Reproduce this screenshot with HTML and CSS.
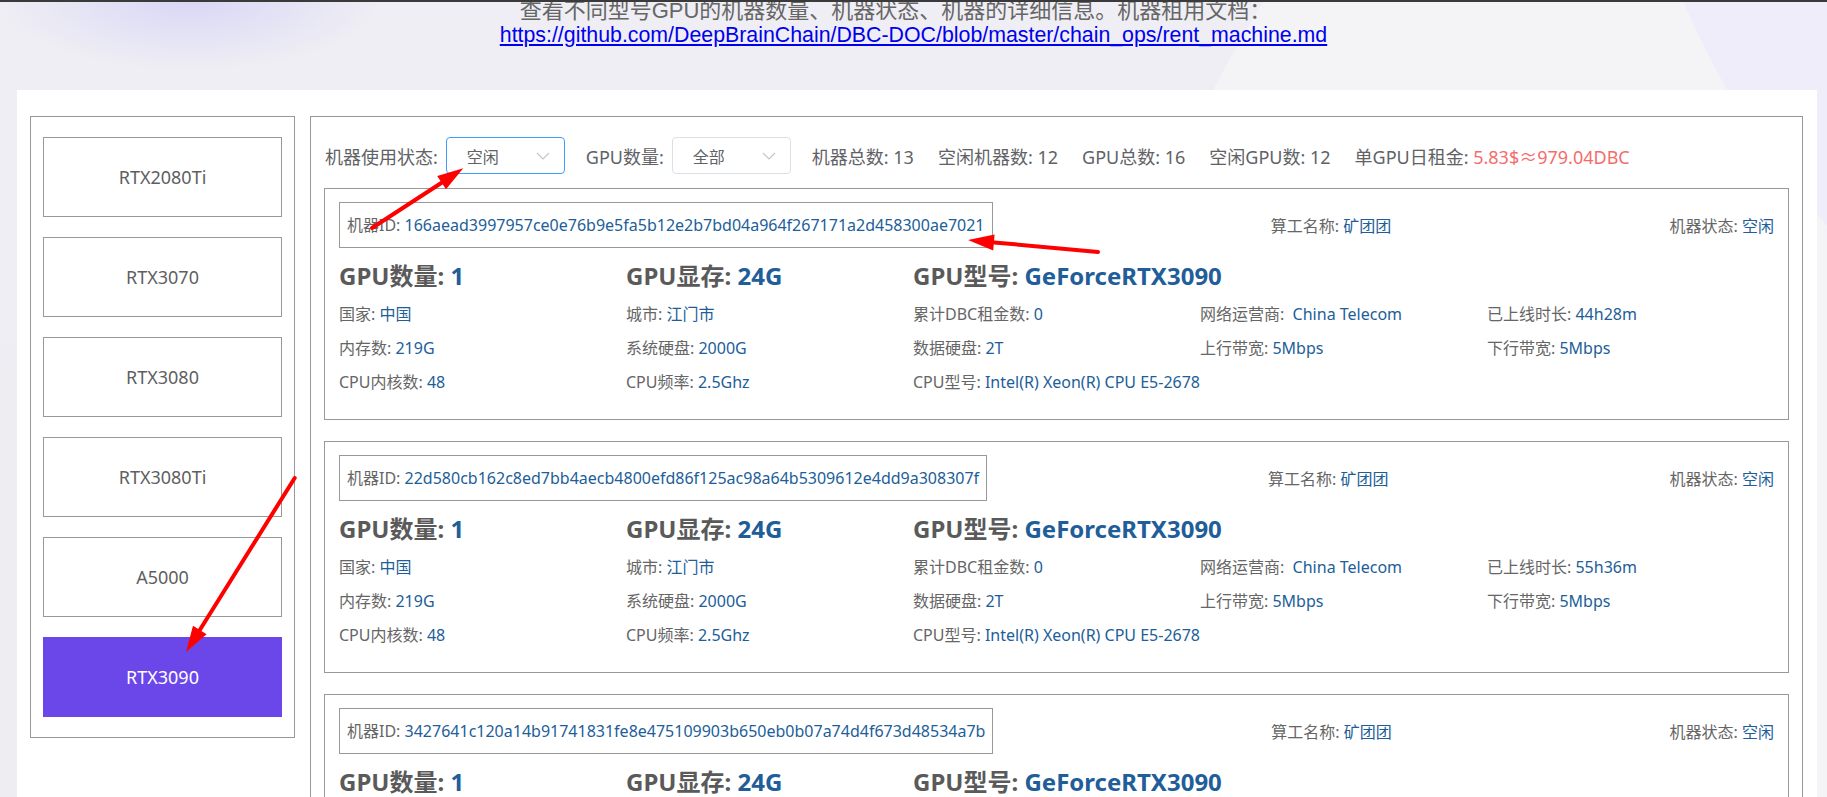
FILE: index.html
```html
<!DOCTYPE html>
<html lang="zh-CN">
<head>
<meta charset="utf-8">
<title>GPU 机器列表</title>
<link rel="stylesheet" href="styles.css">
</head>
<body>
<div class="topline"></div>
<div class="intro">
  <div class="intro-text">查看不同型号GPU的机器数量、机器状态、机器的详细信息。机器租用文档：</div>
  <div><a href="#">https://github.com/DeepBrainChain/DBC-DOC/blob/master/chain_ops/rent_machine.md</a></div>
</div>

<div class="board">
  <div class="models">
    <div class="model">RTX2080Ti</div>
    <div class="model">RTX3070</div>
    <div class="model">RTX3080</div>
    <div class="model">RTX3080Ti</div>
    <div class="model">A5000</div>
    <div class="model active">RTX3090</div>
  </div>

  <div class="machines">
    <div class="filters">
      <span class="flabel">机器使用状态:</span>
      <div class="select focus"><span>空闲</span><svg class="chev" width="14" height="8" viewBox="0 0 14 8"><polyline points="1,1 7,7 13,1" fill="none" stroke="#c0c4cc" stroke-width="1.2"/></svg></div>
      <span class="flabel">GPU数量:</span>
      <div class="select"><span>全部</span><svg class="chev" width="14" height="8" viewBox="0 0 14 8"><polyline points="1,1 7,7 13,1" fill="none" stroke="#c0c4cc" stroke-width="1.2"/></svg></div>
      <span class="stat">机器总数: 13</span>
      <span class="stat">空闲机器数: 12</span>
      <span class="stat">GPU总数: 16</span>
      <span class="stat">空闲GPU数: 12</span>
      <span class="stat">单GPU日租金: <span class="price">5.83$≈979.04DBC</span></span>
    </div>

    <div class="card">
      <div class="card-top">
        <div class="idbox"><span class="lbl">机器ID: </span><span class="val">166aead3997957ce0e76b9e5fa5b12e2b7bd04a964f267171a2d458300ae7021</span></div>
        <div><span class="lbl">算工名称: </span><span class="val">矿团团</span></div>
        <div><span class="lbl">机器状态: </span><span class="val">空闲</span></div>
      </div>
      <div class="heads">
        <div>GPU数量: <span class="val">1</span></div>
        <div>GPU显存: <span class="val">24G</span></div>
        <div class="wide">GPU型号: <span class="val">GeForceRTX3090</span></div>
      </div>
      <div class="rows">
        <div><span class="lbl">国家: </span><span class="val">中国</span></div>
        <div><span class="lbl">城市: </span><span class="val">江门市</span></div>
        <div><span class="lbl">累计DBC租金数: </span><span class="val">0</span></div>
        <div><span class="lbl">网络运营商: &nbsp;</span><span class="val">China Telecom</span></div>
        <div><span class="lbl">已上线时长: </span><span class="val">44h28m</span></div>
        <div><span class="lbl">内存数: </span><span class="val">219G</span></div>
        <div><span class="lbl">系统硬盘: </span><span class="val">2000G</span></div>
        <div><span class="lbl">数据硬盘: </span><span class="val">2T</span></div>
        <div><span class="lbl">上行带宽: </span><span class="val">5Mbps</span></div>
        <div><span class="lbl">下行带宽: </span><span class="val">5Mbps</span></div>
        <div><span class="lbl">CPU内核数: </span><span class="val">48</span></div>
        <div><span class="lbl">CPU频率: </span><span class="val">2.5Ghz</span></div>
        <div class="wide"><span class="lbl">CPU型号: </span><span class="val">Intel(R) Xeon(R) CPU E5-2678</span></div>
      </div>
    </div>

    <div class="card">
      <div class="card-top">
        <div class="idbox"><span class="lbl">机器ID: </span><span class="val">22d580cb162c8ed7bb4aecb4800efd86f125ac98a64b5309612e4dd9a308307f</span></div>
        <div><span class="lbl">算工名称: </span><span class="val">矿团团</span></div>
        <div><span class="lbl">机器状态: </span><span class="val">空闲</span></div>
      </div>
      <div class="heads">
        <div>GPU数量: <span class="val">1</span></div>
        <div>GPU显存: <span class="val">24G</span></div>
        <div class="wide">GPU型号: <span class="val">GeForceRTX3090</span></div>
      </div>
      <div class="rows">
        <div><span class="lbl">国家: </span><span class="val">中国</span></div>
        <div><span class="lbl">城市: </span><span class="val">江门市</span></div>
        <div><span class="lbl">累计DBC租金数: </span><span class="val">0</span></div>
        <div><span class="lbl">网络运营商: &nbsp;</span><span class="val">China Telecom</span></div>
        <div><span class="lbl">已上线时长: </span><span class="val">55h36m</span></div>
        <div><span class="lbl">内存数: </span><span class="val">219G</span></div>
        <div><span class="lbl">系统硬盘: </span><span class="val">2000G</span></div>
        <div><span class="lbl">数据硬盘: </span><span class="val">2T</span></div>
        <div><span class="lbl">上行带宽: </span><span class="val">5Mbps</span></div>
        <div><span class="lbl">下行带宽: </span><span class="val">5Mbps</span></div>
        <div><span class="lbl">CPU内核数: </span><span class="val">48</span></div>
        <div><span class="lbl">CPU频率: </span><span class="val">2.5Ghz</span></div>
        <div class="wide"><span class="lbl">CPU型号: </span><span class="val">Intel(R) Xeon(R) CPU E5-2678</span></div>
      </div>
    </div>

    <div class="card">
      <div class="card-top">
        <div class="idbox"><span class="lbl">机器ID: </span><span class="val">3427641c120a14b91741831fe8e475109903b650eb0b07a74d4f673d48534a7b</span></div>
        <div><span class="lbl">算工名称: </span><span class="val">矿团团</span></div>
        <div><span class="lbl">机器状态: </span><span class="val">空闲</span></div>
      </div>
      <div class="heads">
        <div>GPU数量: <span class="val">1</span></div>
        <div>GPU显存: <span class="val">24G</span></div>
        <div class="wide">GPU型号: <span class="val">GeForceRTX3090</span></div>
      </div>
      <div class="rows">
        <div><span class="lbl">国家: </span><span class="val">中国</span></div>
        <div><span class="lbl">城市: </span><span class="val">江门市</span></div>
        <div><span class="lbl">累计DBC租金数: </span><span class="val">0</span></div>
        <div><span class="lbl">网络运营商: &nbsp;</span><span class="val">China Telecom</span></div>
        <div><span class="lbl">已上线时长: </span><span class="val">40h12m</span></div>
        <div><span class="lbl">内存数: </span><span class="val">219G</span></div>
        <div><span class="lbl">系统硬盘: </span><span class="val">2000G</span></div>
        <div><span class="lbl">数据硬盘: </span><span class="val">2T</span></div>
        <div><span class="lbl">上行带宽: </span><span class="val">5Mbps</span></div>
        <div><span class="lbl">下行带宽: </span><span class="val">5Mbps</span></div>
        <div><span class="lbl">CPU内核数: </span><span class="val">48</span></div>
        <div><span class="lbl">CPU频率: </span><span class="val">2.5Ghz</span></div>
        <div class="wide"><span class="lbl">CPU型号: </span><span class="val">Intel(R) Xeon(R) CPU E5-2678</span></div>
      </div>
    </div>
  </div>
</div>

<svg class="arrows" width="1827" height="797" viewBox="0 0 1827 797">
  <g stroke="#ff0000" stroke-width="4" stroke-linecap="round">
    <line x1="372" y1="228" x2="442" y2="182.5"/>
    <line x1="1098" y1="252" x2="994" y2="242.4"/>
    <line x1="294.7" y1="478" x2="199.8" y2="630"/>
  </g>
  <g fill="#ff0000">
    <polygon points="463.3,168.3 446,189.3 437.2,175.9"/>
    <polygon points="968,240 994.6,234.4 993.2,250.4"/>
    <polygon points="186,652 206.6,634.2 193,625.8"/>
  </g>
</svg>
</body>
</html>
```

FILE: styles.css
```css
* {
  box-sizing: border-box;
}

html,
body {
  margin: 0;
  padding: 0;
}

body {
  position: relative;
  width: 1827px;
  height: 797px;
  overflow: hidden;
  font-family: "Noto Sans", "Noto Sans CJK SC", sans-serif;
  background:
    radial-gradient(circle at 2400px -300px, #efedf9 777px, rgba(239, 237, 249, 0) 778px),
    radial-gradient(circle at 2300px 650px, #f4f4f6 1222px, rgba(244, 244, 246, 0) 1223px),
    radial-gradient(ellipse 190px 70px at 190px 0px, rgba(214, 214, 246, 0.95), rgba(214, 214, 246, 0)),
    linear-gradient(180deg, #efeef4 0%, #eeedf2 100%);
}

.topline {
  position: fixed;
  top: 0;
  left: 0;
  right: 0;
  height: 2px;
  background: #3a3a3a;
  z-index: 5;
}

.intro {
  margin-top: -1px;
  text-align: center;
  font-family: "Liberation Sans", "Noto Sans CJK SC", sans-serif;
  font-size: 21.33px;
  line-height: 24px;
  color: #666;
}

.intro-text {
  font-size: 22px;
  padding-right: 36px;
}

.intro a {
  color: #0000ee;
  text-decoration: underline;
}

.board {
  margin: 43px 0 0 17px;
  width: 1800px;
  background: #fff;
  padding: 26px 14px 40px 13px;
  display: flex;
  align-items: flex-start;
  gap: 15px;
}

.models {
  width: 265px;
  flex: none;
  border: 1px solid #999;
  padding: 20px 12px;
  display: flex;
  flex-direction: column;
  gap: 20px;
}

.model {
  height: 80px;
  border: 1px solid #999;
  display: flex;
  align-items: center;
  justify-content: center;
  font-size: 18px;
  color: #5f5f5f;
}

.model.active {
  background: #6b47ea;
  border-color: #6b47ea;
  color: #fff;
}

.machines {
  flex: 1;
  min-width: 0;
  border: 1px solid #999;
  padding: 20px 13px;
}

.filters {
  display: flex;
  align-items: center;
  height: 37px;
  padding-left: 1px;
  margin-bottom: 14px;
  font-size: 18px;
  color: #606266;
  white-space: nowrap;
}

.flabel {
  margin-right: 8px;
}

.select {
  width: 119px;
  height: 37px;
  border: 1px solid #dcdfe6;
  border-radius: 4px;
  display: flex;
  align-items: center;
  justify-content: space-between;
  padding: 0 14px 0 20px;
  font-size: 16px;
  color: #606266;
  margin-right: 21px;
}

.select.focus {
  border-color: #409eff;
}

.chev {
  display: block;
}

.stat {
  margin-right: 24px;
}

.price {
  color: #f56c6c;
}

.card {
  border: 1px solid #999;
  padding: 13px 14px;
  margin-bottom: 21px;
}

.card-top {
  display: flex;
  justify-content: space-between;
  align-items: center;
  font-size: 16px;
  white-space: nowrap;
}

.idbox {
  border: 1px solid #999;
  height: 46px;
  line-height: 44px;
  padding: 0 7px;
}

.lbl {
  color: #666;
}

.val {
  color: #215e99;
}

.heads {
  display: grid;
  grid-template-columns: repeat(5, 1fr);
  margin-top: 12px;
  font-size: 24px;
  font-weight: 700;
  line-height: 32px;
  color: #5a5a5a;
}

.heads .wide,
.rows .wide {
  grid-column: span 3;
}

.rows {
  display: grid;
  grid-template-columns: repeat(5, 1fr);
  row-gap: 14px;
  margin: 12px 0 14px;
  font-size: 16px;
  line-height: 20px;
  white-space: nowrap;
}

.arrows {
  position: absolute;
  top: 0;
  left: 0;
  pointer-events: none;
  z-index: 10;
}
```
